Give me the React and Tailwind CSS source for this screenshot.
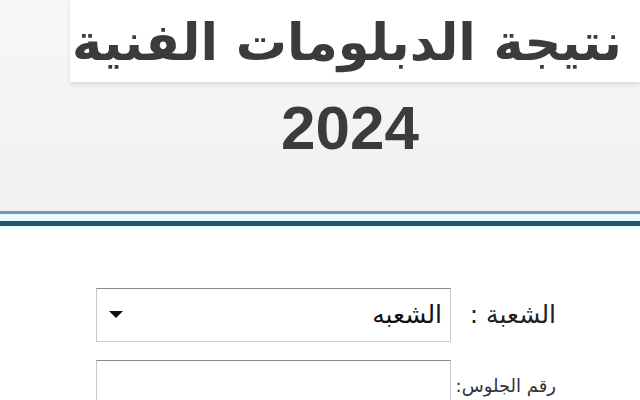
export default function App() {
  return (
    <div
      dir="rtl"
      className="w-[640px] h-[400px] overflow-hidden bg-white"
      style={{ fontFamily: '"DejaVu Sans", "Noto Sans", sans-serif' }}
    >
      {/* header */}
      <header className="h-[211px] bg-gradient-to-b from-[#f7f7f7] to-[#f1f1f1] flex flex-col">
        <div className="ml-[70px] h-[82px] bg-white shadow-[0_3px_4px_rgba(0,0,0,0.10)] flex items-center justify-start pr-[18px] pt-[3px]">
          <h1 className="text-[51px] leading-none font-bold text-[#3b3b3b] whitespace-nowrap">
            نتيجة الدبلومات الفنية
          </h1>
        </div>
        <div className="flex justify-center mt-[15px]" dir="ltr">
          <span
            className="text-[62px] leading-none font-bold text-[#3b3b3b] pl-[60px]"
            style={{ fontFamily: '"Liberation Sans", Arial, sans-serif' }}
          >
            2024
          </span>
        </div>
      </header>

      {/* double rule */}
      <div className="h-[3px] bg-[#7f93a8]" />
      <div className="h-[7px] bg-[#e6fbff]" />
      <div className="h-[5px] bg-[#1e5570]" />
      <div className="h-[3px] bg-[#e9fdff]" />

      {/* form */}
      <div className="pt-[59px] flex flex-col gap-[18px] pr-[84px]">
        <div className="flex items-center gap-[6px]">
          <label className="w-[99px] text-[25px] text-[#222] whitespace-nowrap">الشعبة :</label>
          <div className="w-[355px] h-[54px] border border-[#c9c9c9] border-t-[#8a8a8a] flex items-center justify-between pr-[8px] pl-[8px] bg-white">
            <span className="text-[25px] text-[#111]">الشعبه</span>
            <svg width="14" height="8" viewBox="0 0 14 8" className="ml-[4px]">
              <polygon points="0,0 14,0 7,7" fill="#111" />
            </svg>
          </div>
        </div>
        <div className="flex items-start gap-[6px]">
          <label className="w-[99px] text-[18px] text-[#333] whitespace-nowrap pt-[12px]">رقم الجلوس:</label>
          <div className="w-[355px] h-[54px] border border-[#c9c9c9] border-t-[#8a8a8a] bg-white" />
        </div>
      </div>
    </div>
  );
}
